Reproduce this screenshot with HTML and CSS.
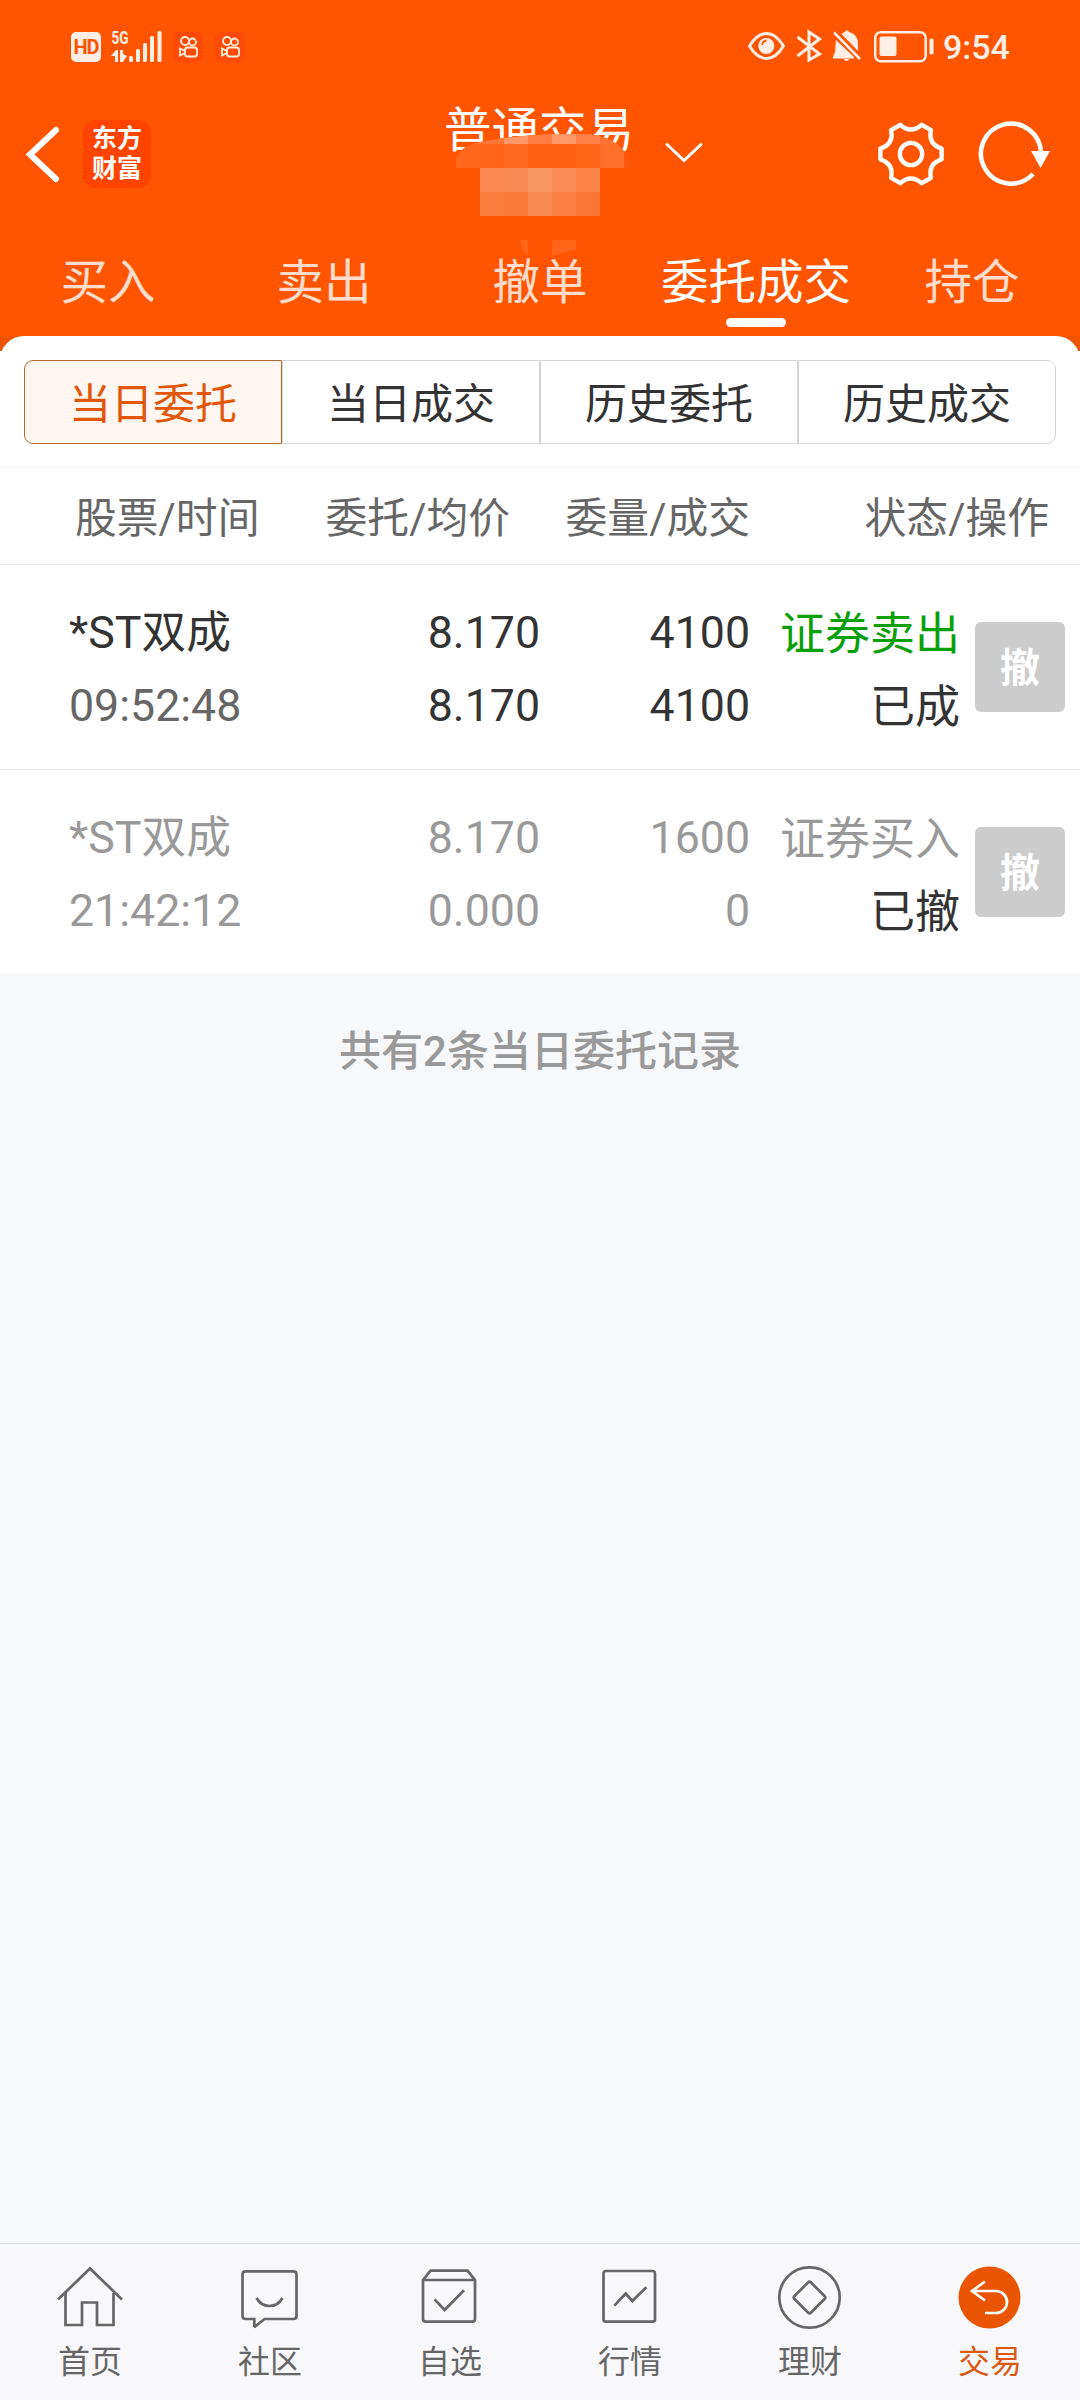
FILE: index.html
```html
<!DOCTYPE html>
<html lang="zh-CN">
<head>
<meta charset="utf-8">
<title>普通交易</title>
<link rel="stylesheet" href="styles.css">
</head>
<body>
<div class="app">
  <header class="top">
    <div class="status">
      <div class="hd">HD</div>
      <svg class="signal" width="52" height="46" viewBox="111 23 52 46" fill="#ffeee6">
        <text x="111.500" y="44" textLength="17" lengthAdjust="spacingAndGlyphs" class="net">5G</text>
        <path d="M111 56l5-6h2v12h-3v-6zM120 50h3v4l4 2-4 6h-3z"/>
        <rect x="129" y="56" width="4" height="6" rx="1.5"/><rect x="136" y="49" width="4" height="13" rx="1.5"/><rect x="143" y="43" width="4" height="19" rx="1.5"/><rect x="150" y="36" width="4" height="26" rx="1.5"/><rect x="157.500" y="31" width="4" height="31" rx="1.500"/>
      </svg>
      <svg class="kuai" width="30" height="30" viewBox="0 0 30 30"><rect width="30" height="30" rx="6" fill="#ff4a08"/><g fill="none" stroke="#fff0dc" stroke-width="1.800"><circle cx="12" cy="9" r="4"/><circle cx="19.500" cy="10" r="3.500"/><rect x="12" y="15.500" width="12" height="9" rx="2.500"/><path d="M12 19l-5-2.500v7l5-2.500"/></g></svg>
      <svg class="kuai second" width="30" height="30" viewBox="0 0 30 30"><rect width="30" height="30" rx="6" fill="#ff4a08"/><g fill="none" stroke="#fff0dc" stroke-width="1.800"><circle cx="12" cy="9" r="4"/><circle cx="19.500" cy="10" r="3.500"/><rect x="12" y="15.500" width="12" height="9" rx="2.500"/><path d="M12 19l-5-2.500v7l5-2.500"/></g></svg>
      <svg class="sys" width="188" height="34" viewBox="747 29 188 34" fill="none" stroke="#ffeee6">
        <path d="M749.500 46Q757 33.500 766.500 33.500T783.500 46Q776 58.500 766.500 58.500T749.500 46z" stroke-width="3"/>
        <circle cx="766.300" cy="46" r="8" fill="#ffeee6" stroke="none"/><path d="M762 45q.5-4 4.500-4.500" stroke="#ff5500" stroke-width="1.800"/>
        <path d="M797.500 37L819.500 54 809 60V32l10.500 7-22 17" stroke-width="3"/>
        <path d="M841.500 34Q843 32.500 845 32l1-1.500h2l1 1.500q9 2 9 12v7zM836 40L854 57v1.500H833V57l2-5zM843.500 59h6q-3 4-6 0z" fill="#ffeee6" stroke="none"/>
        <path d="M834 32.500l26 26.500" stroke-width="2.500"/>
        <rect x="875.200" y="32.200" width="50.500" height="29" rx="5.500" stroke-width="2.500"/><rect x="879.500" y="36.500" width="17" height="19.500" rx="2" fill="#ffeee6" stroke="none"/><rect x="929.500" y="38.500" width="4" height="16" rx="1.500" fill="#ffeee6" stroke="none"/>
      </svg>
      <span class="clock">9:54</span>
    </div>
    <div class="titlebar">
      <svg class="back" width="36" height="60" viewBox="25 124 36 60" fill="none" stroke="#fff" stroke-width="6" stroke-linecap="round"><path d="M56 130L30 154.500 56 179"/></svg>
      <div class="logo"><span>东方</span><span>财富</span></div>
      <h1>普通交易</h1>
      <svg class="down" width="40" height="24" viewBox="664 140 40 24" fill="none" stroke="#fff" stroke-width="3" stroke-linecap="round"><path d="M667 144.500l17 16 17-16"/></svg>
      <svg class="gear" width="70" height="70" viewBox="-36 -36 72 72" fill="none" stroke="#fff" stroke-width="4.500" stroke-linejoin="round"><circle r="11.500"/><path d="M-11-30Q0-20.500 11-30L20.500-24.500Q17.500-10 31.500-5.500V5.500Q17.500 10 20.500 24.500L11 30Q0 20.500-11 30L-20.500 24.500Q-17.500 10-31.500 5.500V-5.500Q-17.500-10-20.500-24.500z"/></svg>
      <svg class="refresh" width="76" height="70" viewBox="977 119 76 70"><path d="M1041 154A30 30 0 1 0 1033 174" fill="none" stroke="#fff" stroke-width="4.500"/><path d="M1031 151h19l-9.500 17z" fill="#fff"/></svg>
    </div>
    <svg class="mosaic" width="180" height="124" viewBox="456 132 180 124">
      <clipPath id="smear"><path d="M456 168V158Q461 146 480 142Q510 136 552 134H590Q612 138 621 148Q630 156 633 168z"/></clipPath>
      <g clip-path="url(#smear)">
        <path fill="#ff5500" d="M456 132h180v36H456z"/>
        <path fill="#ff7638" d="M456 132h48v12h-48z"/><path fill="#ff9866" d="M504 132h24v12h-24z"/><path fill="#ff7d42" d="M528 132h24v12h-24z"/><path fill="#ff9a68" d="M552 132h24v12h-24z"/><path fill="#ff8147" d="M576 132h24v12h-24z"/><path fill="#ff7535" d="M600 132h24v12h-24z"/>
        <path fill="#ff681d" d="M456 144h24v24h-24z"/><path fill="#ff6218" d="M480 144h24v24h-24z"/><path fill="#ff6b23" d="M504 144h24v24h-24z"/><path fill="#ff6014" d="M528 144h48v24h-48z"/><path fill="#ff6419" d="M576 144h24v24h-24z"/><path fill="#ff7029" d="M600 144h24v24h-24z"/><path fill="#ff580b" d="M624 144h12v24h-12z"/>
      </g>
      <path fill="#fa8850" d="M480 168h24v24h-24z"/><path fill="#fa8a54" d="M504 168h24v24h-24z"/><path fill="#f79660" d="M528 168h24v24h-24z"/><path fill="#fa8c55" d="M552 168h24v24h-24z"/><path fill="#fa8348" d="M576 168h24v24h-24z"/>
      <path fill="#fb7d3e" d="M480 192h24v24h-24z"/><path fill="#fb7a3a" d="M504 192h24v24h-24z"/><path fill="#f98c52" d="M528 192h24v24h-24z"/><path fill="#fb7f42" d="M552 192h24v24h-24z"/><path fill="#fb7534" d="M576 192h24v24h-24z"/>
      <path fill="#ff6619" d="M520 240h8v15q-7-4-8-15zM552 240h24v9l-24 7z"/>
    </svg>
    <nav class="tabs">
      <span>买入</span><span>卖出</span><span>撤单</span><span class="on">委托成交</span><span>持仓</span>
    </nav>
  </header>
  <main>
    <div class="sheet">
      <div class="panel">
        <div class="segment"><span class="on">当日委托</span><span>当日成交</span><span>历史委托</span><span>历史成交</span></div>
        <div class="heads"><span>股票/时间</span><span>委托/均价</span><span>委量/成交</span><span>状态/操作</span></div>
        <div class="row">
          <div class="cell name">*ST双成<br><span class="time">09:52:48</span></div>
          <div class="cell">8.170<br>8.170</div>
          <div class="cell">4100<br>4100</div>
          <div class="cell status-cell"><span class="sell">证券卖出</span><br>已成</div>
          <button>撤</button>
        </div>
        <div class="row done">
          <div class="cell name">*ST双成<br>21:42:12</div>
          <div class="cell">8.170<br>0.000</div>
          <div class="cell">1600<br>0</div>
          <div class="cell status-cell">证券买入<br><span class="state">已撤</span></div>
          <button>撤</button>
        </div>
      </div>
    </div>
    <p class="count">共有2条当日委托记录</p>
  </main>
  <footer>
    <div class="item"><svg width="72" height="72" viewBox="0 0 72 72"><path d="M4 37.500L36 6.500 68 37.500M11.500 31V63H28V40.500H43V63H59.500V31"/></svg>首页</div>
    <div class="item"><svg width="72" height="72" viewBox="0 0 72 72"><path d="M11.500 9.300H59.500Q62.500 9.300 62.500 12.300V54Q62.500 57 59.500 57H30.500L21 64.500 20.300 64V57H11.500Q8.500 57 8.500 54V12.300Q8.500 9.300 11.500 9.300zM22.500 36Q27 44 35.500 44T48.500 36"/></svg>社区</div>
    <div class="item"><svg width="72" height="72" viewBox="0 0 72 72"><path d="M9 18L16.500 8.700H53.500L61 18V57Q61 59.700 58.300 59.700H11.700Q9 59.700 9 57zH61M20.600 37.300L30.600 48 50 28.300"/></svg>自选</div>
    <div class="item"><svg width="72" height="72" viewBox="0 0 72 72"><rect x="9.500" y="9" width="51.500" height="50.700" rx="2.500"/><path d="M20.400 43.700L31.700 31.500 38.300 39 52.400 25.300"/></svg>行情</div>
    <div class="item"><svg width="72" height="72" viewBox="0 0 72 72"><circle cx="35.500" cy="35.500" r="30.200"/><path d="M34 20.500Q35.500 19 37 20.500L50.500 34Q52 35.500 50.500 37L37 50.500Q35.500 52 34 50.500L20.500 37Q19 35.500 20.500 34z"/></svg>理财</div>
    <div class="item active"><svg width="72" height="72" viewBox="0 0 72 72"><circle class="disc" cx="35.500" cy="35.500" r="31"/><path d="M31 19.500L18 29 31 38.500M18 29H42A11 11 0 0 1 42 51H31"/></svg>交易</div>
  </footer>
</div>
</body>
</html>
```
FILE: styles.css
```css
* { box-sizing: border-box; }
body { margin: 0; font-family: Roboto, "Noto Sans CJK SC", sans-serif; background: #f7f8fa; }
svg { display: block; flex: none; }
.app { width: 1080px; height: 2400px; display: flex; flex-direction: column; }

.top { position: relative; height: 336px; background: #ff5500; color: #fff; }
.status { height: 94px; padding-left: 71px; display: flex; align-items: center; }
.hd { width: 30px; height: 30px; border-radius: 5px; background: #ffeee6; color: #ff5500; font-size: 20px; font-weight: 700; line-height: 30px; text-align: center; letter-spacing: -1px; }
.signal { margin-left: 10px; margin-top: -2px; }
.net { font: 700 18px Roboto, sans-serif; }
.kuai { margin-left: 10px; }
.kuai.second { margin-left: 12px; }
.sys { margin-left: 502px; margin-top: -2px; }
.clock { margin-left: 8px; font-size: 34px; font-weight: 500; line-height: 48px; color: #ffeee6; }

.titlebar { height: 120px; display: flex; align-items: center; padding-left: 25px; }
.logo { width: 68px; height: 68px; margin-left: 22px; border-radius: 13px; background: #ff4400; display: flex; flex-direction: column; align-items: center; justify-content: center; font-size: 25px; font-weight: 700; line-height: 30px; }
h1 { margin: -46px 0 0 293px; font-size: 47.5px; font-weight: 400; line-height: 60px; white-space: nowrap; }
.down { margin-left: 30px; margin-top: -4px; }
.gear { margin-left: 172px; }
.refresh { margin-left: 31px; }
.mosaic { position: absolute; left: 456px; top: 132px; }
.tabs { height: 122px; display: flex; font-size: 47.5px; line-height: 64px; padding-top: 37px; color: #ffdccb; }
.tabs span { width: 216px; display: flex; flex-direction: column; align-items: center; }
.tabs .on { color: #fff; }
.tabs .on::after { content: ""; width: 60px; height: 9px; margin-top: 3px; border-radius: 5px; background: #fff; }

main { flex: 1; }
.sheet { background: linear-gradient(#ef5500 15px, #fff 15px); }
.panel { background: #fff; border-radius: 24px 24px 0 0; height: 638px; padding-top: 24px; }
.segment { display: flex; margin: 0 24px; height: 84px; }
.segment span { flex: 1; border: 1px solid #d3d6d8; font-size: 42px; line-height: 88px; text-align: center; color: #333; }
.segment span:last-child { border-radius: 0 9px 9px 0; }
.segment .on { border-color: #b96a32; border-radius: 9px 0 0 9px; background: #fff6f2; color: #e25608; }
.heads { margin-top: 23px; height: 98px; border-top: 1px solid #f4f4f4; border-bottom: 1px solid #ebebeb; padding-left: 75px; display: grid; grid-template-columns: 195px 240px 240px 299px; text-align: right; font-size: 41.8px; line-height: 101px; color: #666; }
.heads span { height: 96px; }
.heads span:first-child { text-align: left; }
.row { height: 205px; border-bottom: 1px solid #ebebeb; padding: 32px 0 0 69px; display: grid; grid-template-columns: 231px 240px 210px 210px 90px; font-size: 44.7px; line-height: 73px; color: #333; }
.cell { text-align: right; }
.status-cell { padding-top: 1px; font-size: 45px; }
.name { text-align: left; }
.time { color: #666; }
.sell { color: #099f09; }
.done { color: #999; border-bottom: 0; }
.state { color: #333; }
button { width: 90px; height: 90px; margin: 25px 0 0 15px; border: 0; border-radius: 6px; padding: 3px 0 0; background: #ccc; color: #fff; font: 700 40px/87px Roboto, "Noto Sans CJK SC", sans-serif; }
.count { margin: 48px 0 0; text-align: center; font-size: 42px; line-height: 60px; font-weight: 500; color: #999; }

footer { height: 157px; border-top: 1px solid #e0e1e3; display: flex; background: #f8f8fa; }
.item { width: 180px; padding-top: 18px; display: flex; flex-direction: column; align-items: center; font-size: 32px; line-height: 57px; color: #666; }
.item svg { fill: none; stroke: #666; stroke-width: 2.7; }
.active { color: #dc5914; }
.active svg { stroke: #fff; }
.active .disc { fill: #ea5504; stroke: none; }
```
